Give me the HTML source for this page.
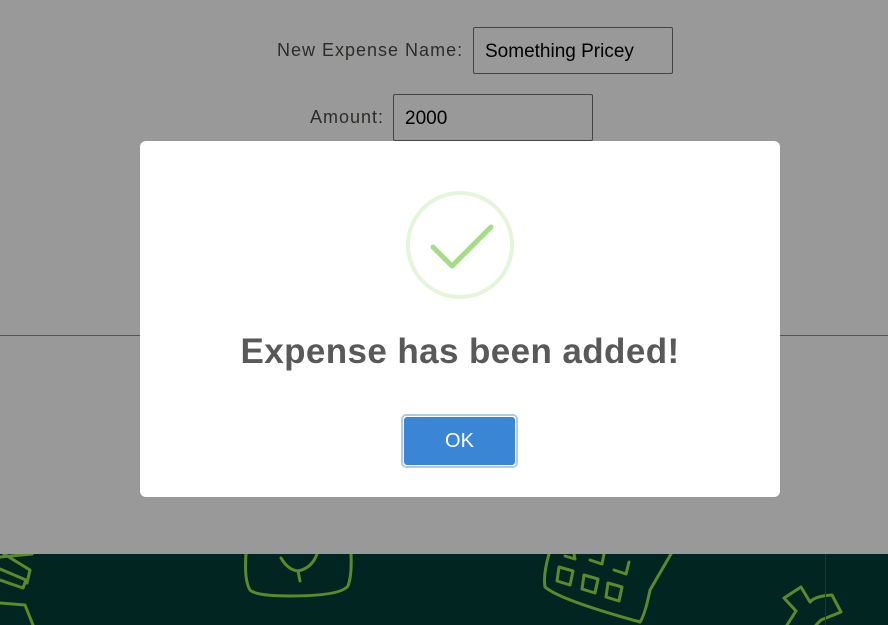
<!DOCTYPE html>
<html><head><meta charset="utf-8"><style>
html,body{margin:0;padding:0;width:888px;height:625px;overflow:hidden;background:#999;font-family:"Liberation Sans",sans-serif;position:relative}
.abs{position:absolute}
.lbl{color:#2a2e28;font-size:18px;letter-spacing:1px}
.inp{background:#999;border:1px solid #444;border-radius:2px;box-sizing:border-box;font-size:19px;color:#000;padding-left:11px;line-height:47px}
.footer{left:0;top:554px;width:888px;height:71px;background:#012622;overflow:hidden}
.dlg{left:140px;top:141px;width:640px;height:356px;background:#fff;border-radius:6px}
</style></head><body>
<div class="abs lbl" style="left:277px;top:40px">New Expense Name:</div>
<div class="abs inp" style="left:473px;top:27px;width:200px;height:47px">Something Pricey</div>
<div class="abs lbl" style="left:310px;top:107px">Amount:</div>
<div class="abs inp" style="left:393px;top:94px;width:200px;height:47px">2000</div>
<div class="abs" style="left:0;top:335px;width:888px;height:1px;background:#555"></div>
<div class="abs footer">
<svg width="888" height="71" viewBox="0 554 888 71" fill="none" stroke="#5c8a2a" stroke-width="3" stroke-linecap="round" stroke-linejoin="round">
<path d="M0 557 L32 554 M4 554 L30 570 L27 583 M0 569 L26 580 L23 588 L0 580"/>
<path d="M0 603 L25 605 L33 625"/>
<path d="M246 554 Q244 580 250 590 Q256 596 290 596 Q340 596 348 586 Q352 575 351 554"/>
<path d="M281 558 Q288 570 298 571 Q312 568 317 554 M298 571 L300 581"/>
<path d="M549 554 Q543 575 545 587 Q560 600 640 622 Q645 615 650 590 L671 554"/>
<path d="M559 567 l14 4 l-3 14 l-13 -4 z M584 575 l14 4 l-3 14 l-13 -4 z M608 583 l14 4 l-3 14 l-13 -4 z M565 556 l10 3 l-1 -5 M590 560 l12 4 l2 -10 M614 570 l12 4 l3 -12"/>
<path d="M787 625 L796 611 L784 598 L801 587 L810 602 Q815 596 832 595 L841 612 L821 620 L816 625"/>
</svg>
<div class="abs" style="left:825px;top:0;width:1px;height:71px;background:#1a3a30"></div>
</div>
<div class="abs dlg">
<svg class="abs" style="left:262px;top:47px" width="116" height="116" viewBox="0 0 116 116">
<circle cx="58" cy="57" r="52" fill="none" stroke="#e4f5da" stroke-width="4"/>
<path d="M31 59 L50 78 L89 39" fill="none" stroke="#a5dc86" stroke-width="5" stroke-linecap="round" stroke-linejoin="round"/>
</svg>
<div class="abs" style="left:0;top:191px;width:640px;text-align:center;font-size:35px;font-weight:bold;color:#595959;letter-spacing:0.4px">Expense has been added!</div>
<div class="abs" style="left:261px;top:273px;width:117px;height:54px;box-sizing:border-box;border:2px solid #b3c9e2;border-radius:5px;padding:1px">
<div style="width:100%;height:100%;background:#3b85d5;border-radius:3px;color:#fff;font-size:20px;text-align:center;line-height:48px">OK</div>
</div>
</div>
</body></html>
